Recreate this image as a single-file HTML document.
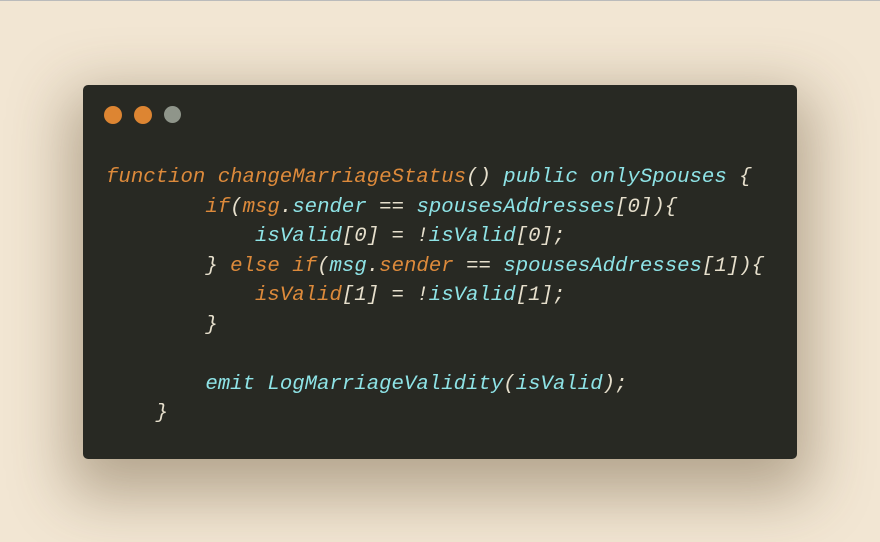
<!DOCTYPE html><html><head><style>
body{margin:0;width:880px;height:542px;background:#f2e6d3;position:relative;overflow:hidden;border-top:1px solid #bbb;box-sizing:border-box}
.card{position:absolute;left:83px;top:84px;width:714px;height:374px;background:#282923;border-radius:5px;box-shadow:0 22px 60px 14px rgba(90,70,40,.4)}
.d{position:absolute;top:105px;width:18px;height:18px;border-radius:50%}
pre{position:absolute;left:106px;top:162px;margin:0;font-family:"Liberation Mono",monospace;font-style:italic;font-size:20.7px;line-height:29.5px;color:#e6dfcc}
.o{color:#dd8a3b}.c{color:#8ee3e6}
</style></head><body>
<div class="card"></div>
<div class="d" style="left:104px;background:#dd8532"></div>
<div class="d" style="left:134px;background:#dd8532"></div>
<div class="d" style="left:164px;width:17px;height:17px;background:#8f958a"></div>
<pre><span class="o">function changeMarriageStatus</span>() <span class="c">public onlySpouses</span> {
        <span class="o">if</span>(<span class="o">msg</span>.<span class="c">sender</span> == <span class="c">spousesAddresses</span>[0]){
            <span class="c">isValid</span>[0] = !<span class="c">isValid</span>[0];
        } <span class="o">else if</span>(<span class="c">msg</span>.<span class="o">sender</span> == <span class="c">spousesAddresses</span>[1]){
            <span class="o">isValid</span>[1] = !<span class="c">isValid</span>[1];
        }

        <span class="c">emit LogMarriageValidity</span>(<span class="c">isValid</span>);
    }</pre>
</body></html>
